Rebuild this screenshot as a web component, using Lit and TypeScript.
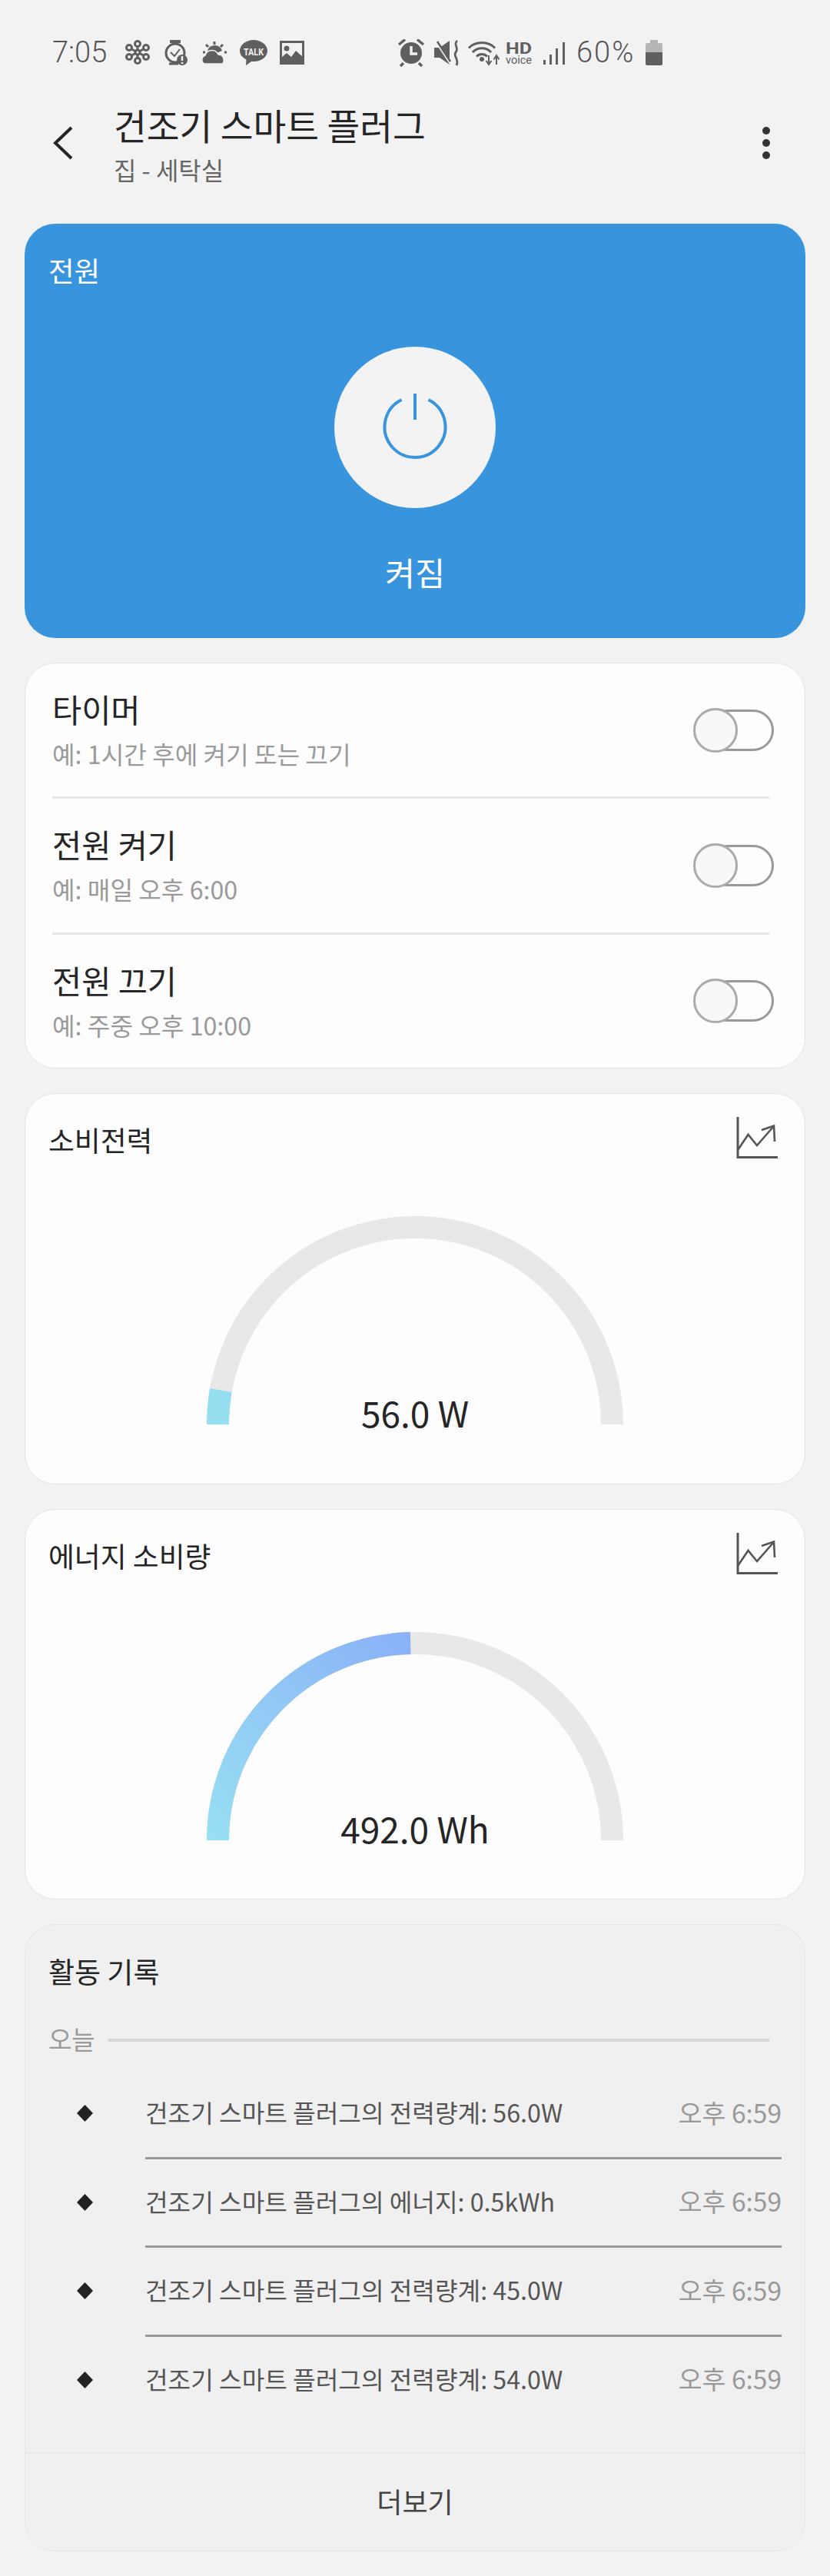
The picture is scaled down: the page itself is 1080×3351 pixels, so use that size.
import { LitElement, html, css, svg } from "lit";
import { customElement } from "lit/decorators.js";

const TOGGLES = [
  { title: "타이머", sub: "예: 1시간 후에 켜기 또는 끄기" },
  { title: "전원 켜기", sub: "예: 매일 오후 6:00" },
  { title: "전원 끄기", sub: "예: 주중 오후 10:00" },
];

const LOG = [
  "건조기 스마트 플러그의 전력량계: 56.0W",
  "건조기 스마트 플러그의 에너지: 0.5kWh",
  "건조기 스마트 플러그의 전력량계: 45.0W",
  "건조기 스마트 플러그의 전력량계: 54.0W",
];

function arcEnd(deg: number) {
  const r = 256.5;
  const a = (deg * Math.PI) / 180;
  return { x: 271 - r * Math.cos(a), y: 272 - r * Math.sin(a) };
}

const chartIcon = html`<svg class="chart" width="54" height="54" viewBox="0 0 54 54" fill="none" stroke="#555" stroke-width="3">
  <path d="M2 0V52.5H54" />
  <path stroke-width="2.6" d="M2 43L15.5 23L27 37L48 13" />
  <path stroke-width="2.6" d="M33 17L49 11.5L50 32" />
</svg>`;

function gauge(id: string, deg: number, value: string, stroke: string) {
  const e = arcEnd(deg);
  return html`<div class="gauge">
    <svg width="542" height="272" viewBox="0 0 542 272" fill="none" stroke-width="29">
      <defs>
        <linearGradient id=${id} gradientUnits="userSpaceOnUse" x1="0" y1="272" x2="270" y2="0">
          <stop offset="0" stop-color="#98e0f2" />
          <stop offset="1" stop-color="#8ab0f8" />
        </linearGradient>
      </defs>
      <path stroke="#e8e8e8" d="M14.5 272A256.5 256.5 0 0 1 527.5 272" />
      <path stroke=${stroke === "grad" ? `url(#${id})` : stroke} d="M14.5 272A256.5 256.5 0 0 1 ${e.x} ${e.y}" />
    </svg>
    <div class="value">${value}</div>
  </div>`;
}

const leftIcons = svg`
  <g fill="none" stroke="#5f5f5f" stroke-width="3">
    <circle cx="179" cy="68" r="3"/>
    <circle cx="179" cy="57" r="3.500"/><circle cx="179" cy="79" r="3.500"/>
    <circle cx="168" cy="62" r="3.500"/><circle cx="190" cy="62" r="3.500"/>
    <circle cx="168" cy="74" r="3.500"/><circle cx="190" cy="74" r="3.500"/>
    <path d="M179 61V65M179 71V75M171.500 64L176 66.500M186.500 64L182 66.500M171.500 72L176 69.500M186.500 72L182 69.500"/>
  </g>
  <g fill="none" stroke="#5f5f5f" stroke-width="3">
    <circle cx="228" cy="69" r="12"/>
    <path d="M221 54H235" stroke-width="4"/><path d="M220 83H232" stroke-width="3"/>
    <path stroke-width="2" d="M222 68L227 73L234 64"/>
  </g>
  <circle cx="237" cy="78" r="7" fill="#5f5f5f"/>
  <path d="M237 73V79M237 81V83" stroke="#f2f2f2" stroke-width="2.500"/>
  <path fill="#5f5f5f" d="M270 66A10 10 0 0 1 289 66L284 68L275 70Z"/>
  <path fill="#5f5f5f" stroke="#f2f2f2" stroke-width="1.500" d="M266 83A6 6 0 0 1 267 72A9 9 0 0 1 284 71A6.500 6.500 0 0 1 291 77A6 6 0 0 1 289 83Z"/>
  <path d="M279 54V58M268 58L271 61M290 58L287 61M264 68H267M292 68H295" stroke="#5f5f5f" stroke-width="3" fill="none"/>
  <path fill="#5f5f5f" d="M330 52C340 52 348 58.500 348 66C348 74 340 80 330 80L327 80L320 85L320.500 77.500C315.500 75 312 71 312 66C312 58.500 320 52 330 52Z"/>
  <text x="330" y="71.500" text-anchor="middle" font-family="Roboto, sans-serif" font-weight="700" font-size="13.500" fill="#f2f2f2" textLength="26" lengthAdjust="spacingAndGlyphs">TALK</text>
  <rect x="365.500" y="54.500" width="29" height="28" fill="none" stroke="#5f5f5f" stroke-width="3"/>
  <circle cx="373" cy="63" r="3.500" fill="#5f5f5f"/>
  <path fill="#5f5f5f" d="M366 82V75L373 69L379 74L385 66L394 74V82Z"/>
`;

const rightIcons = svg`
  <circle cx="535" cy="69" r="14" fill="#5f5f5f"/>
  <path d="M535 60V70H543" fill="none" stroke="#f2f2f2" stroke-width="3.500"/>
  <path d="M519 58L527 51.500M551 58L543 51.500M525 82L521 86M545 82L549 86" fill="none" stroke="#5f5f5f" stroke-width="3.500"/>
  <path fill="#5f5f5f" d="M565 62H572L585 53V84L572 75H565Z"/>
  <path d="M566 52L587 84" stroke="#f2f2f2" stroke-width="3" fill="none"/>
  <path d="M569 54L586 80" stroke="#5f5f5f" stroke-width="2.500" fill="none"/>
  <path d="M595 53C589 58 598 62 593 68C589 73 598 77 594 85" stroke="#5f5f5f" stroke-width="2.800" fill="none"/>
  <g fill="none" stroke="#5f5f5f" stroke-width="3">
    <path d="M610 62.500C618 53 636 53 644 62.500"/>
    <path d="M615 68C621 61 633 61 639 68"/>
    <path d="M620 73.500C624 69.500 630 69.500 634 73.500"/>
  </g>
  <circle cx="627" cy="77" r="3" fill="#5f5f5f"/>
  <path d="M636 72V83M632.500 79L636 84L639.500 79M646 84V73M642.500 77.500L646 72L649.500 77.500" fill="none" stroke="#5f5f5f" stroke-width="2"/>
  <text x="658" y="70" font-family="Roboto, sans-serif" font-weight="700" font-size="21" fill="#5f5f5f" textLength="34" lengthAdjust="spacingAndGlyphs">HD</text>
  <text x="658" y="83" font-family="Roboto, sans-serif" font-size="15" fill="#5f5f5f" textLength="34" lengthAdjust="spacingAndGlyphs">voice</text>
  <g fill="#5f5f5f">
    <rect x="707" y="78" width="3" height="6"/>
    <rect x="715" y="71" width="3" height="13"/>
    <rect x="723" y="63" width="3" height="21"/>
    <rect x="732" y="55" width="3" height="29"/>
  </g>
`;

@customElement("app-root")
export class AppRoot extends LitElement {
  static styles = css`
    :host {
      display: block;
      width: 1080px;
      min-height: 3351px;
      background: #f2f2f2;
      font-family: "Noto Sans CJK KR", "Noto Sans", sans-serif;
      color: #252525;
    }
    * { box-sizing: border-box; }
    svg { display: block; flex: none; }
    .status {
      display: flex;
      height: 33px;
      margin-top: 0;
      align-items: center;
    }
    .top { padding-top: 52px; }
    .clock {
      width: 73px;
      margin-left: 68px;
      font: 300 38px/33px Roboto, sans-serif;
      color: #555;
    }
    .pct {
      width: 90px;
      font: 300 38px/33px Roboto, sans-serif;
      letter-spacing: 2px;
      color: #555;
    }
    .header {
      display: flex;
      margin-top: 52px;
      padding: 0 0 0 68px;
      height: 104px;
    }
    .head-text { margin-left: 46px; flex: 1; }
    .title { font-size: 46.500px; line-height: 50px; color: #252525; white-space: nowrap; }
    .subtitle { font-size: 32px; line-height: 40px; margin-top: 13px; color: #666; }
    .more { margin-right: 77px; }
    .cards {
      display: flex;
      flex-direction: column;
      gap: 32px;
      padding: 50px 32px 32px;
    }
    .hero {
      height: 539px;
      border-radius: 40px;
      background: #3994de;
      color: #fff;
      display: flex;
      flex-direction: column;
      align-items: center;
      padding-top: 39px;
    }
    .hero-label { align-self: flex-start; margin-left: 31px; font-size: 36.500px; line-height: 44px; }
    .power {
      width: 210px;
      height: 210px;
      margin-top: 77px;
      border-radius: 50%;
      background: #f3f3f3;
      display: flex;
      align-items: center;
      justify-content: center;
    }
    .hero-state { margin-top: 58px; font-size: 42.500px; line-height: 50px; }
    .card {
      border: 1px solid #e4e4e4;
      border-radius: 40px;
      background: #fdfdfd;
    }
    .toggles { height: 528px; }
    .row {
      display: flex;
      align-items: center;
      justify-content: space-between;
      height: 173.4px;
      padding: 0 40px 0 35px;
    }
    .row-text { align-self: flex-start; padding-top: 34px; }
    .row-title { font-size: 41.500px; line-height: 50px; color: #252525; }
    .row-sub { font-size: 32.200px; line-height: 40px; margin-top: 13px; color: #9a9a9a; }
    .divider { height: 3px; margin: 0 46px 0 35px; background: #e6e6e6; }
    .toggle { position: relative; width: 105px; height: 58px; }
    .track {
      position: absolute;
      right: 0;
      top: 2px;
      width: 87px;
      height: 54px;
      border: 3px solid #999;
      border-radius: 27px;
    }
    .knob {
      position: absolute;
      left: 0;
      top: 0;
      width: 58px;
      height: 58px;
      border: 3px solid #aaa;
      border-radius: 50%;
      background: #f8f8f8;
    }
    .gcard { height: 509px; }
    .gcard.second { height: 508px; }
    .ghead {
      display: flex;
      justify-content: space-between;
      align-items: center;
      height: 54px;
      margin: 30px 35px 74px 30px;
    }
    .gtitle { font-size: 36.800px; line-height: 50px; position: relative; top: 2px; color: #252525; }
    .gauge { position: relative; width: 542px; margin: 0 auto; }
    .value {
      position: absolute;
      left: 0;
      right: 0;
      bottom: -14px;
      text-align: center;
      font-size: 46px;
      line-height: 60px;
      color: #252525;
    }
    .activity {
      height: 816px;
      background: #f0f0f0;
      border-color: #e6e6e6;
      display: flex;
      flex-direction: column;
      padding-top: 35px;
    }
    .atitle { margin-left: 30px; font-size: 37px; line-height: 50px; color: #252525; }
    .today {
      display: flex;
      align-items: center;
      gap: 17px;
      margin: 43px 46px 0 30px;
      font-size: 33px;
      line-height: 40px;
      color: #9a9a9a;
    }
    .today i { flex: 1; height: 4px; background: #d6d6d6; position: relative; top: 2px; }
    .list { margin-top: 21px; padding: 0 30px 0 67px; }
    .item { display: flex; align-items: flex-start; }
    .dia { width: 89px; height: 112.500px; display: flex; align-items: center; }
    .item-body {
      flex: 1;
      height: 115.500px;
      border-bottom: 3px solid #999;
      display: flex;
      align-items: center;
      justify-content: space-between;
      font-size: 32.200px;
      color: #555;
    }
    .item-body span { position: relative; top: -2px; }
    .item:last-child .item-body { border-bottom: 0; height: 112.500px; }
    .item-body .time { color: #999; font-size: 33.500px; }
    .foot {
      margin-top: 38px;
      flex: 1;
      border-top: 2px solid #e8e8e8;
      display: flex;
      align-items: center;
      justify-content: center;
      font-size: 36px;
      color: #444;
      padding-bottom: 4px;
    }
  `;

  render() {
    return html`
      <div class="top">
        <div class="status">
          <div class="clock">7:05</div>
          <svg width="364" height="36" viewBox="141 51 364 36">${leftIcons}</svg>
          <svg width="245" height="36" viewBox="505 51 245 36">${rightIcons}</svg>
          <div class="pct">60%</div>
          <svg width="22" height="33" viewBox="0 0 22 33">
            <path fill="#b5b5b5" d="M6 0H16V4H20Q22 4 22 6V16H0V6Q0 4 2 4H6Z" />
            <path fill="#5f5f5f" d="M0 16H22V31Q22 33 20 33H2Q0 33 0 31Z" />
          </svg>
        </div>
      </div>
      <div class="header">
        <svg width="34" height="104" viewBox="68 137 34 104" fill="none" stroke="#252525" stroke-width="4">
          <path d="M93 166L72 186L93 206" />
        </svg>
        <div class="head-text">
          <div class="title">건조기 스마트 플러그</div>
          <div class="subtitle">집 - 세탁실</div>
        </div>
        <svg class="more" width="12" height="104" viewBox="0 -3 12 104" fill="#333">
          <circle cx="6" cy="30" r="5" /><circle cx="6" cy="46" r="5" /><circle cx="6" cy="62" r="5" />
        </svg>
      </div>
      <div class="cards">
        <section class="hero">
          <div class="hero-label">전원</div>
          <div class="power">
            <svg width="86" height="88" viewBox="0 0 86 88" fill="none" stroke="#3994de" stroke-width="4">
              <path d="M43 0V34" />
              <path d="M25.500 8A39.500 39.500 0 1 0 60.500 8" />
            </svg>
          </div>
          <div class="hero-state">켜짐</div>
        </section>

        <section class="card toggles">
          ${TOGGLES.map(
            (t, i) => html`
              ${i ? html`<div class="divider"></div>` : ""}
              <div class="row">
                <div class="row-text">
                  <div class="row-title">${t.title}</div>
                  <div class="row-sub">${t.sub}</div>
                </div>
                <div class="toggle"><div class="track"></div><div class="knob"></div></div>
              </div>
            `
          )}
        </section>

        <section class="card gcard">
          <div class="ghead"><div class="gtitle">소비전력</div>${chartIcon}</div>
          ${gauge("g1", 10, "56.0 W", "#96dff0")}
        </section>

        <section class="card gcard second">
          <div class="ghead"><div class="gtitle">에너지 소비량</div>${chartIcon}</div>
          ${gauge("g2", 88.7, "492.0 Wh", "grad")}
        </section>

        <section class="card activity">
          <div class="atitle">활동 기록</div>
          <div class="today"><span>오늘</span><i></i></div>
          <div class="list">
            ${LOG.map(
              (l) => html`<div class="item">
                <div class="dia">
                  <svg width="21" height="22" viewBox="0 0 21 22"><path fill="#222" d="M10.500 0L21 11L10.500 22L0 11Z" /></svg>
                </div>
                <div class="item-body"><span>${l}</span><span class="time">오후 6:59</span></div>
              </div>`
            )}
          </div>
          <div class="foot">더보기</div>
        </section>
      </div>
    `;
  }
}
